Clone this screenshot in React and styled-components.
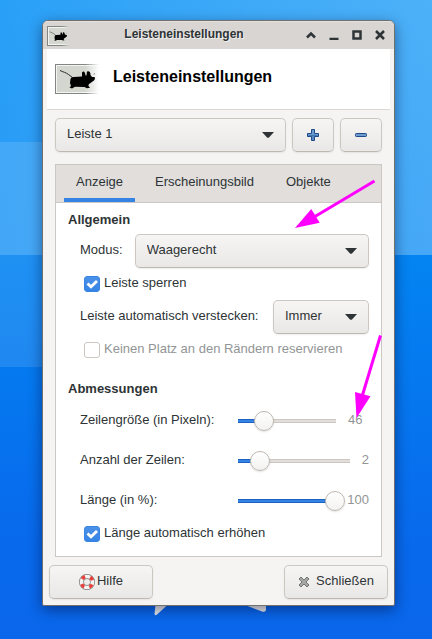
import React, { useState } from "react";
import styled, { createGlobalStyle } from "styled-components";

const GlobalStyle = createGlobalStyle`
  * {
    box-sizing: border-box;
  }
  body {
    margin: 0;
    background: #0a68ec;
    color: #2e3436;
    font-family: "Liberation Sans", Arial, sans-serif;
    font-size: 13px;
    line-height: 20px;
  }
  button, select, input {
    margin: 0;
    color: inherit;
    font: inherit;
  }
`;

const Desktop = styled.div`
  position: relative;
  min-height: 100vh;
  padding: 20px 37px 33px 42px;
  overflow: hidden;
`;

const Wallpaper = styled.svg`
  position: absolute;
  top: 0;
  left: 0;
  width: 100%;
  height: 100%;
`;

const Marks = styled.svg`
  position: absolute;
  top: 0;
  left: 0;
  pointer-events: none;
`;

const Window = styled.main`
  position: relative;
  border: 1px solid #71706d;
  border-radius: 6px 6px 2px 2px;
  background: #f5f4f2;
  box-shadow: 0 4px 14px rgba(0, 0, 40, 0.45);
  overflow: hidden;
`;

const TitleBar = styled.div`
  display: flex;
  align-items: center;
  height: 28px;
  padding: 0 3px 0 4px;
  background: #d9d5d2;
  border-top: 1px solid #e4e1df;
`;

const Title = styled.div`
  flex: 1;
  padding-bottom: 4px;
  font-size: 12px;
  font-weight: bold;
  text-align: center;
  text-shadow: 1px 1px 0 #f3f1f0;
`;

const WindowButton = styled.button`
  display: flex;
  justify-content: center;
  width: 23px;
  padding: 0 0 1px;
  border: 0;
  background: none;
`;

const Header = styled.header`
  display: flex;
  align-items: center;
  gap: 14px;
  height: 61px;
  margin: 0 4px;
  padding: 0 8px;
  border-bottom: 1px solid #d9d8d6;
  background: #fff;
`;

const Heading = styled.h1`
  margin: 0;
  padding-bottom: 4px;
  color: #000;
  font-size: 16px;
`;

const Body = styled.div`
  padding: 8px 12px;
`;

const PanelPicker = styled.div`
  display: flex;
  gap: 6px;
  margin-bottom: 12px;
`;

const Button = styled.button`
  display: flex;
  align-items: center;
  justify-content: center;
  gap: ${props => props.$gap || 0}px;
  width: ${props => props.$width}px;
  height: 34px;
  padding: 0;
  border: 1px solid #cdc7c2;
  border-bottom-color: #bfb8b1;
  border-radius: 5px;
  background: linear-gradient(#f6f5f4, #eae8e6);
  box-shadow: 0 1px 2px rgba(0, 0, 0, 0.07);
`;

const ButtonText = styled.span`
  padding-bottom: 2px;
`;

const SelectBox = styled.div`
  display: grid;
  align-items: center;
  flex: ${props => (props.$width ? `0 0 ${props.$width}px` : "1")};

  > * {
    grid-area: 1 / 1;
  }

  svg {
    justify-self: end;
    margin-right: 12px;
    pointer-events: none;
  }
`;

const Select = styled.select`
  appearance: none;
  width: 100%;
  height: 34px;
  padding: 0 32px 2px 11px;
  border: 1px solid #cdc7c2;
  border-bottom-color: #bfb8b1;
  border-radius: 5px;
  background: linear-gradient(#f6f5f4, #eae8e6);
  box-shadow: 0 1px 2px rgba(0, 0, 0, 0.07);
`;

const Notebook = styled.div`
  border: 1px solid #cbc8c3;
  background: #fff;
`;

const Tabs = styled.div`
  display: flex;
  gap: 8px;
  height: 38px;
  padding: 0 8px;
  border-bottom: 1px solid #cbc8c3;
  background: #e1dedb;
`;

const Tab = styled.button`
  height: 37px;
  padding: 0 12px;
  border: 0;
  border-top: 1px solid transparent;
  border-bottom: 4px solid ${props => (props.$active ? "#3584e4" : "transparent")};
  background: none;
`;

const Page = styled.div`
  padding: 7px 12px 12px;
`;

const Section = styled.section`
  & + & {
    padding-top: 19px;
  }
`;

const SectionTitle = styled.h2`
  margin: 0;
  font-size: 13px;
`;

const Rows = styled.div`
  display: flex;
  flex-direction: column;
  gap: ${props => props.$gap}px;
  padding: ${props => props.$top}px 0 0 12px;
`;

const Row = styled.div`
  display: flex;
  align-items: center;
  justify-content: space-between;
  gap: 12px;
`;

const RowLabel = styled.label`
  padding-bottom: 2px;
  white-space: nowrap;
`;

const CheckLabel = styled.label`
  display: flex;
  align-items: center;
  gap: 4px;
  height: 20px;
  padding-left: 4px;
  color: ${props => (props.$disabled ? "#929595" : "inherit")};
`;

const CheckText = styled.span`
  padding-bottom: 2px;
`;

const CheckBox = styled.span`
  display: grid;

  > * {
    grid-area: 1 / 1;
  }

  svg {
    pointer-events: none;
  }
`;

const CheckInput = styled.input`
  appearance: none;
  width: 16px;
  height: 16px;
  border: 1px solid #cdc7c2;
  border-radius: 3px;
  background: #fff;

  &:checked {
    border-color: #3584e4;
    background: linear-gradient(#4b91e8, #3584e4);
  }
`;

const SliderRow = styled.div`
  display: grid;
  grid-template-columns: 148px 1fr auto;
  align-items: center;
  height: 40px;
`;

// The knob's centre travels the whole track, so the input overhangs
// the painted track by half a knob on each side.
const Range = styled.input`
  appearance: none;
  width: 100%;
  min-width: 0;
  height: 20px;
  background:
    linear-gradient(#1b64c2, #1b64c2 1px, #3584e4 1px, #3584e4 3px, #1b64c2 3px)
      10px 8px / calc((100% - 20px) * var(--fill)) 4px no-repeat,
    linear-gradient(#cdc7c2, #cdc7c2 1px, #e1dedb 1px, #e1dedb 3px, #cdc7c2 3px)
      center / calc(100% - 20px) 4px no-repeat;

  &::-webkit-slider-thumb {
    appearance: none;
    width: 20px;
    height: 20px;
    border: 1px solid #bfb8b1;
    border-radius: 50%;
    background: linear-gradient(#fff, #f3f2f1);
    box-shadow: 0 1px 2px rgba(0, 0, 0, 0.12);
  }
`;

const RangeValue = styled.output`
  min-width: ${props => props.$min}px;
  margin-left: 2px;
  padding-bottom: 3px;
  color: #929595;
`;

const Footer = styled.footer`
  display: flex;
  justify-content: space-between;
  padding: 0 6px 6px;
`;

const Mouse = ({ width, height, offset = 0 }) => {
  const frame = 30 + offset * 2;
  const line = 44 / width;
  const id = `fade${width}`;
  return (
    <svg width={width} height={height} viewBox={`0 0 44 ${frame}`} aria-hidden="true">
      <defs>
        <linearGradient id={id}>
          <stop offset="0.680" stopColor="#fff" />
          <stop offset="1" stopColor="#000" />
        </linearGradient>
        <mask id={`${id}m`}>
          <rect width="44" height={frame} fill={`url(#${id})`} />
        </mask>
      </defs>
      <g mask={`url(#${id}m)`}>
        <rect width="48" height={frame} fill="#828582" />
        <rect x={line} y={line} width="48" height={frame - line * 2} fill="#f4f5f2" />
        <rect x={line * 2} y={line * 2} width="48" height={frame - line * 4} fill="#d3d7cf" />
      </g>
      <g transform={`translate(0 ${offset})`}>
        <path
          d="M5 6.500C8 8 11 8.500 13.500 10.500L17.500 13.500"
          fill="none"
          stroke="#2a2a2a"
          strokeWidth="1"
        />
        <path d="M15.500 15Q16 12.700 19 13L27 12.500L27 8.500Q28.500 6.500 30 9L30.500 11.500L31.500 11.500L32 7.500Q35.500 6.500 35.500 11L37 13L39.700 13Q40.500 15 39 16.500L35.500 19L34 20L33.300 21.700L35 23.700L32 24.200L29.500 23L20 22.800L17 24.500L14.500 23.500L16 22L15 19Z" />
        <path d="M39 10.500L39.500 9.500M36.200 12.500L36.700 12" stroke="#555" strokeWidth="1" />
      </g>
    </svg>
  );
};

const Dropdown = ({ options, width, ...rest }) => (
  <SelectBox $width={width}>
    <Select {...rest}>
      {options.map(option => (
        <option key={option}>{option}</option>
      ))}
    </Select>
    <svg width="12" height="6" viewBox="0 0 12 6" aria-hidden="true">
      <path d="M0 0H12L7 5.500Q6 6.200 5 5.500Z" fill="#2e3436" />
    </svg>
  </SelectBox>
);

const Check = ({ label, initial = false, disabled = false }) => {
  const [checked, setChecked] = useState(initial);
  return (
    <CheckLabel $disabled={disabled}>
      <CheckBox>
        <CheckInput
          type="checkbox"
          checked={checked}
          disabled={disabled}
          onChange={event => setChecked(event.target.checked)}
        />
        {checked && (
          <svg width="16" height="16" viewBox="0 0 16 16" aria-hidden="true">
            <path d="M3.500 7.500L7 10.800L13 5" fill="none" stroke="#fff" strokeWidth="2.800" />
          </svg>
        )}
      </CheckBox>
      <CheckText>{label}</CheckText>
    </CheckLabel>
  );
};

const Slider = ({ id, label, min, max, initial, valueWidth }) => {
  const [value, setValue] = useState(initial);
  return (
    <SliderRow>
      <RowLabel htmlFor={id}>{label}</RowLabel>
      <Range
        id={id}
        type="range"
        min={min}
        max={max}
        value={value}
        onChange={event => setValue(Number(event.target.value))}
        style={{ "--fill": (value - min) / (max - min) }}
      />
      <RangeValue htmlFor={id} $min={valueWidth}>
        {value}
      </RangeValue>
    </SliderRow>
  );
};

const windowButtons = [
  { name: "Einrollen", path: "M1 7.500L5 3.500L9 7.500" },
  { name: "Minimieren", path: "M0.500 9H9.500" },
  { name: "Maximieren", path: "M1.500 1.500H8.500V8.500H1.500Z" },
  { name: "Fenster schließen", path: "M1 1L9 9M9 1L1 9" }
];

const tabs = ["Anzeige", "Erscheinungsbild", "Objekte"];

const App = () => {
  const [tab, setTab] = useState("Anzeige");

  return (
    <Desktop>
      <GlobalStyle />
      <Wallpaper viewBox="0 0 432 639" preserveAspectRatio="none" aria-hidden="true">
        <defs>
          <linearGradient id="sky" x2="1" y2="0">
            <stop offset="0" stopColor="#29a0f7" />
            <stop offset="1" stopColor="#4db1f8" />
          </linearGradient>
          <linearGradient id="sea" x2="0" y2="1">
            <stop offset="0" stopColor="#0384f2" />
            <stop offset="0.750" stopColor="#0869ec" />
            <stop offset="1" stopColor="#0a67eb" />
          </linearGradient>
          <linearGradient id="shade" x2="0" y2="1">
            <stop offset="0" stopColor="#2b82f0" stopOpacity="0" />
            <stop offset="1" stopColor="#2b82f0" stopOpacity="0.200" />
          </linearGradient>
        </defs>
        <rect y="255" width="432" height="384" fill="url(#sea)" />
        <rect width="432" height="255" fill="url(#sky)" />
        <rect width="432" height="255" fill="url(#shade)" />
        <rect y="142" width="100" height="113" fill="#fff" fillOpacity="0.120" />
        <rect y="255" width="100" height="112" fill="#fff" fillOpacity="0.110" />
        <path d="M156 600H173L157 614.500Q155 616 154.500 614Z" fill="#eee" />
        <path d="M232 600H266V610Q265.500 612.500 262 611.500Z" fill="#eee" />
      </Wallpaper>

      <Window>
        <TitleBar>
          <Mouse width={22} height={20} offset={5} />
          <Title>Leisteneinstellungen</Title>
          {windowButtons.map(({ name, path }) => (
            <WindowButton key={name} aria-label={name}>
              <svg width="10" height="10" viewBox="0 0 10 10">
                <path d={path} fill="none" stroke="#2e3436" strokeWidth="2.500" />
              </svg>
            </WindowButton>
          ))}
        </TitleBar>

        <Header>
          <Mouse width={44} height={30} />
          <Heading>Leisteneinstellungen</Heading>
        </Header>

        <Body>
          <PanelPicker>
            <Dropdown aria-label="Leiste" options={["Leiste 1"]} />
            <Button $width={42} aria-label="Leiste hinzufügen">
              <svg width="12" height="12" viewBox="0 0 12 12">
                <path
                  d="M4.500 0.500H7.500V4.500H11.500V7.500H7.500V11.500H4.500V7.500H0.500V4.500H4.500Z"
                  fill="#6d9bd0"
                  stroke="#204a87"
                  strokeLinejoin="round"
                />
                <path d="M6 6V11M1.500 6.500H10.500" stroke="#3f74b5" />
              </svg>
            </Button>
            <Button $width={42} aria-label="Leiste entfernen">
              <svg width="12" height="4" viewBox="0 0 12 4">
                <rect x="0.500" y="0.500" width="11" height="3" rx="0.800" fill="#6d9bd0" stroke="#204a87" />
              </svg>
            </Button>
          </PanelPicker>

          <Notebook>
            <Tabs role="tablist">
              {tabs.map(name => (
                <Tab
                  key={name}
                  role="tab"
                  aria-selected={tab === name}
                  $active={tab === name}
                  onClick={() => setTab(name)}
                >
                  {name}
                </Tab>
              ))}
            </Tabs>

            <Page>
              <Section>
                <SectionTitle>Allgemein</SectionTitle>
                <Rows $top={4} $gap={6}>
                  <Row>
                    <RowLabel htmlFor="mode">Modus:</RowLabel>
                    <Dropdown id="mode" options={["Waagerecht", "Senkrecht", "Deskbar"]} />
                  </Row>
                  <Check label="Leiste sperren" initial />
                  <Row>
                    <RowLabel htmlFor="autohide">Leiste automatisch verstecken:</RowLabel>
                    <Dropdown id="autohide" width={96} options={["Immer", "Nie"]} />
                  </Row>
                  <Check label="Keinen Platz an den Rändern reservieren" disabled />
                </Rows>
              </Section>

              <Section>
                <SectionTitle>Abmessungen</SectionTitle>
                <Rows $top={2} $gap={0}>
                  <Slider
                    id="size"
                    label="Zeilengröße (in Pixeln):"
                    min={16}
                    max={128}
                    initial={46}
                    valueWidth={21}
                  />
                  <Slider id="rows" label="Anzahl der Zeilen:" min={1} max={6} initial={2} />
                  <Slider id="length" label="Länge (in %):" min={1} max={100} initial={100} />
                </Rows>
                <Rows $top={3} $gap={0}>
                  <Check label="Länge automatisch erhöhen" initial />
                </Rows>
              </Section>
            </Page>
          </Notebook>
        </Body>

        <Footer>
          <Button $width={104} $gap={2}>
            <svg width="16" height="16" viewBox="0 0 16 16" aria-hidden="true">
              <circle cx="8" cy="8" r="5.500" fill="none" stroke="#777a76" strokeWidth="5" />
              <circle cx="8" cy="8" r="5.500" fill="none" stroke="#f4f4f2" strokeWidth="3.600" />
              <circle
                cx="8"
                cy="8"
                r="5.700"
                fill="none"
                stroke="#e8403c"
                strokeWidth="3.400"
                strokeDasharray="3.600 5.353"
                strokeDashoffset="-2.676"
              />
            </svg>
            <ButtonText>Hilfe</ButtonText>
          </Button>
          <Button $width={104} $gap={6}>
            <svg width="12" height="12" viewBox="0 0 12 12" aria-hidden="true">
              <path
                d="M3 1L6 4L9 1L11 3L8 6L11 9L9 11L6 8L3 11L1 9L4 6L1 3Z"
                fill="#a4a7a2"
                stroke="#747672"
                strokeLinejoin="round"
              />
            </svg>
            <ButtonText>Schließen</ButtonText>
          </Button>
        </Footer>
      </Window>

      <Marks width="432" height="639" viewBox="0 0 432 639" aria-hidden="true">
        <g fill="#f0f" stroke="none">
          <path d="M295 228L311.300 209L319.700 222.700Z" />
          <path d="M356.500 418L355 392L370.500 396.300Z" />
        </g>
        <path d="M374.500 181L315 216.500M380.500 335.500L362.500 395" stroke="#f0f" strokeWidth="3" />
      </Marks>
    </Desktop>
  );
};

export default App;
